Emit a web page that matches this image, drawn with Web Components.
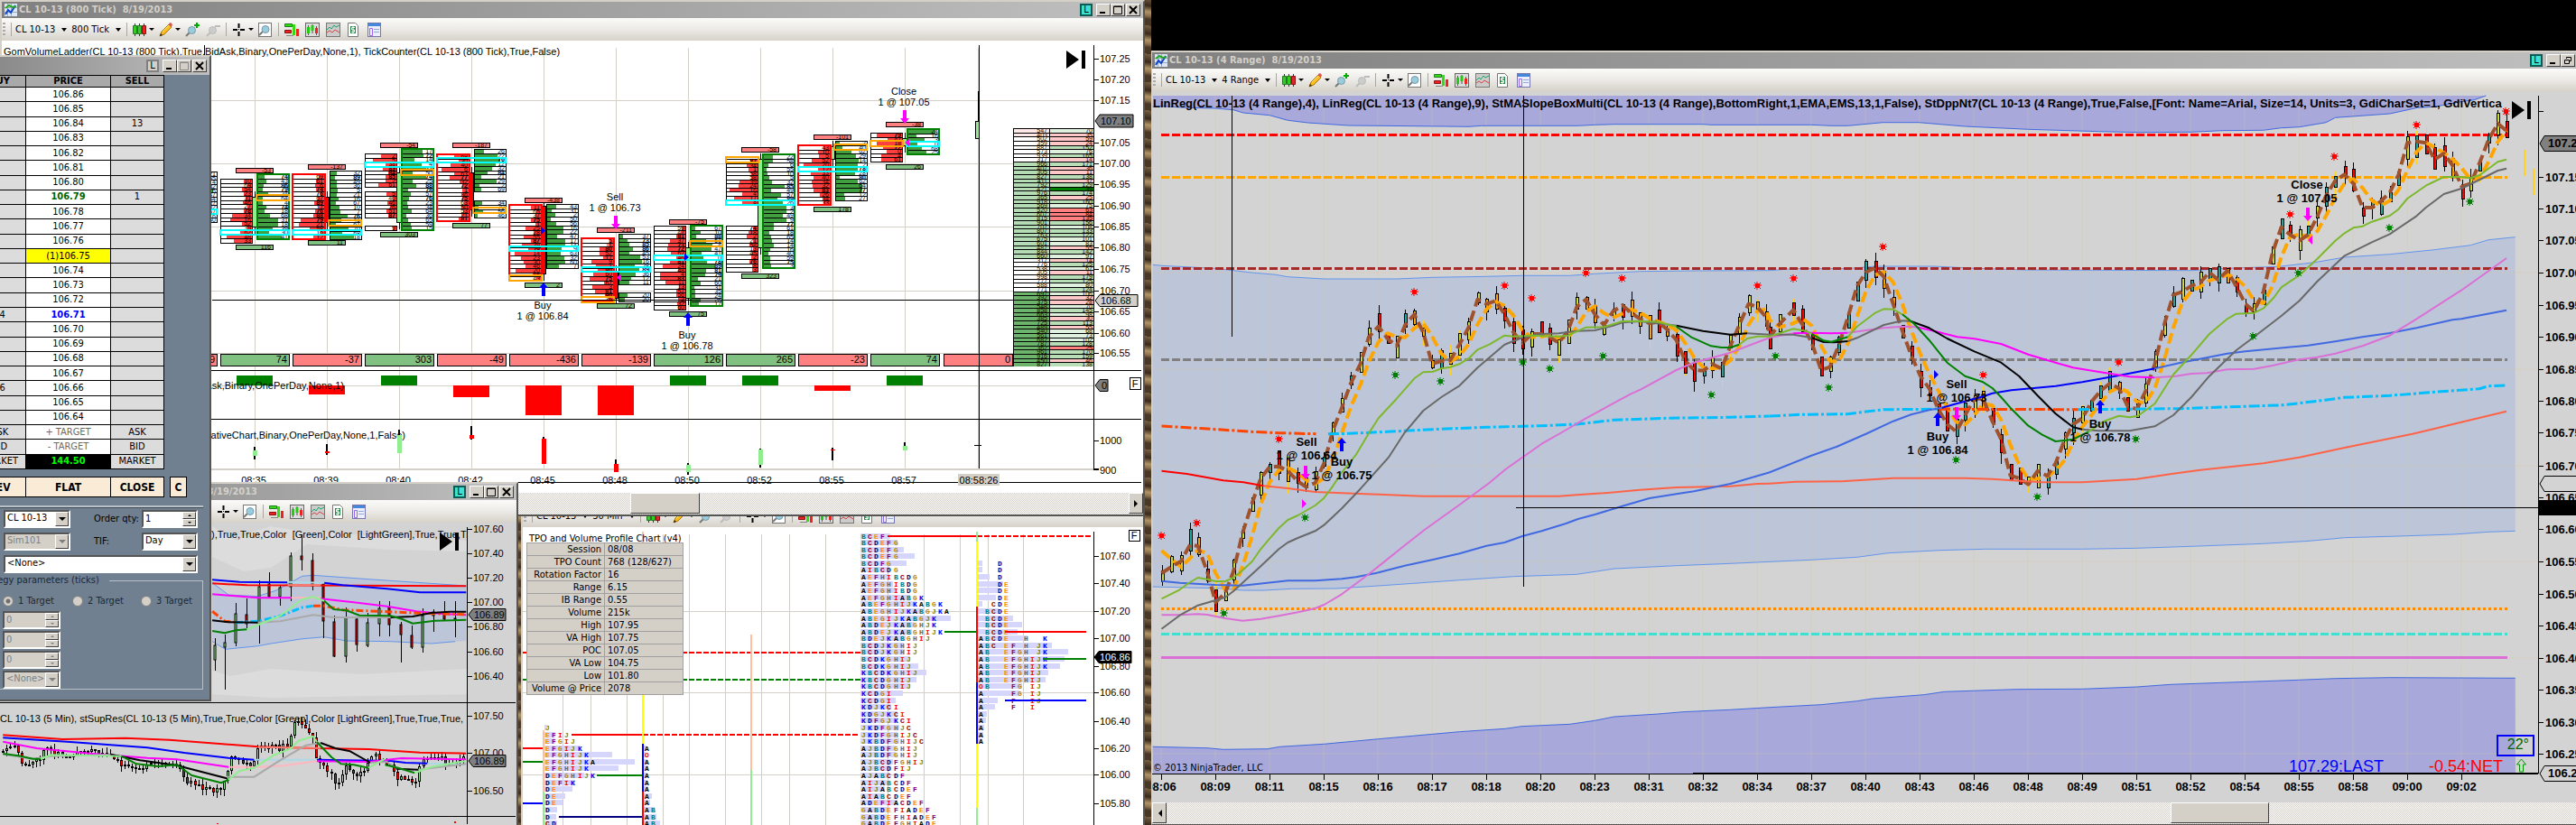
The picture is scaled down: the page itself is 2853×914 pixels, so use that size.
<!DOCTYPE html>
<html lang="en">
<head>
<meta charset="utf-8">
<title>CL 10-13 trading desktop</title>
<style>
html,body{margin:0;height:100%;overflow:hidden;background:#000}
body{font:11px/14px "DejaVu Sans Condensed","DejaVu Sans",sans-serif;color:#000}
</style>
</head>
<body>
<trading-desktop></trading-desktop>
<script>
/* ---------- drawing helpers ---------- */
const L=(x1,y1,x2,y2,c='#000',w=1,d='')=>`<line x1="${x1}" y1="${y1}" x2="${x2}" y2="${y2}" stroke="${c}" stroke-width="${w}"${d?` stroke-dasharray="${d}"`:''} shape-rendering="crispEdges"/>`;
const R=(x,y,w,h,f='none',s='',sw=1)=>`<rect x="${x}" y="${y}" width="${w}" height="${h}" fill="${f}"${s?` stroke="${s}" stroke-width="${sw}"`:''} shape-rendering="crispEdges"/>`;
const T=(x,y,t,o={})=>`<text x="${x}" y="${y}" font-size="${o.s||11}" text-anchor="${o.a||'start'}" fill="${o.f||'#000'}" font-weight="${o.w||400}"${o.ff?` font-family="${o.ff}"`:''}>${t}</text>`;
const UI="'DejaVu Sans Condensed','DejaVu Sans',sans-serif";
const pts=s=>s.trim().split(/\s+/).map(p=>p.split(',').map(Number));
/* a projection turns sample units into chart pixels */
const proj=(x0,sx,y0,sy)=>s=>pts(s).map(([x,y])=>[x0+x/sx,y0+y/sy]);
const path=p=>p.map(([x,y])=>x.toFixed(1)+','+y.toFixed(1)).join(' ');
const C=(p,c,w=1,d='')=>`<polyline points="${path(p)}" fill="none" stroke="${c}" stroke-width="${w}" stroke-linejoin="round"${d?` stroke-dasharray="${d}"`:''}/>`;
const G=(p,f)=>`<polygon points="${path(p)}" fill="${f}"/>`;
const arrow=(x,y,h,up,c)=>{const k=up?1:-1,t=up?y:y+h;return `<path fill="${c}" d="M${x} ${t}l5 ${6*k}h-3v${(h-6)*k}h-4v${-(h-6)*k}h-3z"/>`};
const tag=(x,y,w,h,t,f,c='#000',o={})=>`<path d="M${x} ${y}l5 ${-h/2}h${w-5}v${h}h${5-w}z" fill="${f}" stroke="#000"/>`+T(x+(o.dx||6),y+4,t,{f:c,...o});
const skip=(x,y)=>`<path d="M${x} ${y}v20l14 -10z"/>`+R(x+17,y,4,20,'#000');
const rng=seed=>()=>((seed=Math.imul(seed,1664525)+1013904223>>>0)/4294967296);

/* ---------- toolbar icons ---------- */
const ICON={
candles:'<path stroke="#333" d="M2.500 1v14M7.500 1v14M12.500 1v14"/><path fill="#3c2" stroke="#272" d="M.5 3.500h4v9h-4zM5.500 3.500h4v9h-4z"/><path fill="#e22" stroke="#811" d="M10.500 3.500h4v9h-4z"/>',
pencil:'<path fill="#fb2" stroke="#a70" d="M1 15l2-5 8-8 3 3-8 8z"/><path fill="#d55" d="M11 1l2-1 2 2-1 3-3-3z"/><path fill="#222" d="M1 15l1-3 2 2z"/><path stroke="#fe8" d="M4 10l7-7"/>',
zin:'<path stroke="#777" stroke-width="2" d="M1 15l4-4"/><circle cx="7.500" cy="8.500" r="4" fill="#9cd" stroke="#79a"/><path stroke="#0a0" stroke-width="2" d="M10 3h6M13 0v6"/>',
zout:'<path stroke="#bbb" stroke-width="2" d="M1 15l4-4"/><circle cx="7.500" cy="8.500" r="4" fill="#ccc" stroke="#bbb"/><path stroke="#bbb" stroke-width="2" d="M10 4h6"/>',
cross:'<path stroke="#000" stroke-width="2" d="M1 8h5M9 8h5M7.500 1v5M7.500 10v5"/><path fill="#000" d="M7 7h1v1h-1z"/>',
find:'<rect x=".5" y=".5" width="14" height="15" fill="#fff" stroke="#777"/><path stroke="#777" stroke-width="2" d="M1 14l4-4"/><circle cx="8" cy="7.500" r="4" fill="#9cd" stroke="#79a"/>',
trader:'<path fill="#3d1" stroke="#272" d="M.5 1.500h8v3h-8z"/><path fill="#e22" stroke="#811" d="M.5 8.500h7v3h-7z"/><path stroke="#888" d="M9 4.500h2M9 11.500h2M2 14.500h8"/><path fill="#3d1" d="M9 2h3v12h-3z"/><path fill="#e22" d="M13 7h3v8h-3z"/>',
panel:'<rect x=".5" y=".5" width="15" height="15" fill="#ddd" stroke="#666"/><path stroke="#555" d="M3.500 3v11M8 2v10M12.500 4v10"/><path fill="#2c1" d="M2 5h3v7H2zM6.500 3h3v6h-3z"/><path fill="#e22" d="M11 6h3v6h-3z"/>',
lines:'<rect x=".5" y=".5" width="15" height="15" fill="#ccc" stroke="#777"/><path fill="none" stroke="#1a6" d="M1 8l3-3 2 2 3-4 2 2 4-2"/><path fill="none" stroke="#d44" d="M1 11l3-2 3 2 3-3 5 3"/>',
money:'<path fill="#fff" stroke="#777" d="M1.500 .5h8l3 3v12h-11z"/><path fill="#284" d="M4 4h6v8H4z"/><path fill="none" stroke="#fff" d="M9 5.500H5.500V8h3v2.500H5M7 4v8"/>',
form:'<rect x=".5" y=".5" width="14" height="15" fill="#eef" stroke="#77a"/><path fill="#48d" d="M1 1h13v3H1z"/><path fill="none" stroke="#96e" d="M2.500 6.500h3v8h-3z"/><path stroke="#8ad" d="M7 7.500h6M7 10.500h6"/>'};
const icon=n=>`<svg width="16" height="16" viewBox="0 0 16 16" fill="none" aria-hidden="true">${ICON[n]}</svg>`;

/* ---------- window furniture ---------- */
const define=(name,html)=>customElements.define(name,class extends HTMLElement{
  connectedCallback(){ if(this.shadowRoot)return; this.attachShadow({mode:'open'}).innerHTML=typeof html==='function'?html(this):html; }
});

define('tool-bar',e=>`<style>
:host{display:flex;align-items:center;gap:7px;height:25px;padding-left:1px;background:linear-gradient(#fbfbfa,#eceae6 50%,#d6d2ca);overflow:hidden}
button{all:unset;display:flex;align-items:center;gap:6px;white-space:nowrap;font:inherit}
button.t{gap:7px;margin-left:-2px}
button i{border:solid transparent;border-width:3px 3px 0;border-top-color:#000;width:0}
button.t i{border-width:4px 3px 0;border-top-color:#000}
hr{width:1px;height:15px;margin:0 -1px;border:0;background:#aaa7a0;flex:none}
.g{width:3px;height:16px;background:repeating-linear-gradient(#aaa 0 2px,transparent 2px 4px);flex:none}
.d{width:22px;gap:3px}.d i{margin-left:-1px}
svg{flex:none}
</style><span class="g"></span><hr>
<button class="t">${e.getAttribute('instrument')}<i></i></button><button class="t">${e.getAttribute('period')}<i></i></button><hr>
<button class="d" aria-label="Chart style">${icon('candles')}<i></i></button><button class="d" aria-label="Draw">${icon('pencil')}<i></i></button>
<button aria-label="Zoom in">${icon('zin')}</button><button aria-label="Zoom out">${icon('zout')}</button><hr>
<button class="d" aria-label="Cross hair">${icon('cross')}<i></i></button><button aria-label="Data box">${icon('find')}</button><hr>
${['trader','panel','lines','money','form'].map(n=>`<button aria-label="${n}">${icon(n)}</button>`).join('')}`);

define('desk-window',e=>{
 const k=e.getAttribute('kind'), restore=k==='restore';
 return `<style>
:host{display:flex;flex-direction:column;box-sizing:border-box;position:absolute;border:2px solid;border-color:#d4d0c8 #555 #555 #d4d0c8;background:#d4d0c8}
header{display:flex;align-items:center;height:18px;padding:0 3px;background:linear-gradient(90deg,#808080,#c0c0c0);color:#d4d0c8;font-weight:700;white-space:pre}
h1{font:inherit;margin:0 auto 0 2px}
:host([kind=tail]) h1{margin-left:98px;width:170px;text-align:right}
:host([kind=tool]) header{height:20px;background:linear-gradient(90deg,#8a8a8a,#c0c0c0)}
button{all:unset;box-sizing:border-box;width:16px;height:14px;border:1px solid;border-color:#fff #404040 #404040 #fff;background:#d4d0c8;display:grid;place-items:center}
.l{width:14px;height:14px;margin-right:4px;border:2px solid #0a5c55;background:#40e0d0;color:#000;font-weight:400;line-height:10px}
:host([kind=tool]) .l{border-color:#808080;background:#d4d0c8}
.x{margin-left:1px}
</style><header>${k==='tool'?'':`<svg width="14" height="14" viewBox="0 0 14 14" fill="none"><rect width="14" height="14" fill="#dde6f5"/><path stroke="#9ab" d="M3.500 0v14M7.500 0v14M0 4.500h14M0 9.500h14"/><path stroke="#14c" stroke-width="2" d="M1 12l3-5 3 3 5-8"/><path stroke="#2a2" stroke-width="2" d="M1 5l4-3 4 2 4-1"/></svg>`}<h1>${e.getAttribute('heading')||''}</h1>
<button class="l">L</button><button aria-label="Minimize"><svg width="10" height="10"><path d="M1 7h6v2H1z"/></svg></button><button aria-label="Maximize"><svg width="10" height="10" fill="none" stroke="${k==='tool'?'#888':'#000'}">${restore?'<path d="M3.500 3V1.500h5v4H7M1.500 4.500h5v4h-5z"/>':'<path d="M.5 1h9v8.500h-9zM0 1.500h10"/>'}</svg></button><button class="x" aria-label="Close"><svg width="10" height="10" stroke="#000" stroke-width="2"><path d="M1 1l8 8M9 1l-8 8"/></svg></button></header><slot></slot>`});

define('scroll-track',e=>`<style>
:host{display:flex;height:24px;background:repeating-conic-gradient(#d4d0c8 0 25%,#fff 0 50%) 0 0/2px 2px}
b{box-sizing:border-box;height:23px;width:16px;background:#d4d0c8;border:1px solid;border-color:#fff #404040 #404040 #fff;display:grid;place-items:center}
.t{flex:${e.getAttribute('size')} 0 0}.p{flex:${e.getAttribute('before')} 0 0}.n{flex:${e.getAttribute('after')} 0 0}
</style><b><svg width="5" height="8"><path d="M5 0v8L1 4z"/></svg></b><span class="p"></span><b class="t"></b><span class="n"></span><b><svg width="5" height="8"><path d="M0 0v8l4-4z"/></svg></b>`);

/* ---------- charts ---------- */
class Chart extends HTMLElement{
 connectedCallback(){ if(this.shadowRoot)return;
  this.attachShadow({mode:'open'}).innerHTML=`<style>:host{display:block;position:relative}.plot{display:block;width:100%;height:auto;font-family:"Liberation Sans",Arial,sans-serif;background:${this.bg}}text{white-space:pre}::slotted(*){position:absolute}</style><svg class="plot" viewBox="${this.box}">${this.draw()}</svg><slot></slot>`;}
}

/* volume ladder chart, 800 tick */
customElements.define('ladder-chart',class extends Chart{
 bg='#fff'; box='2 45 1264 501';
 rand=rng(7);
 cells(x0,x1,ya,yb,left,hot){ let s=R(x0,ya,x1-x0,yb-ya,'#fff');const n=Math.round((yb-ya)/4.67);
  for(let i=0;i<n;i++){const y=Math.round(ya+i*(yb-ya)/n),v=Math.floor(this.rand()*90),near=hot?Math.abs(y-hot)<26:0;
   const w=Math.round(4+this.rand()*8+(near?this.rand()*20:0)),h=4;
   s+=R(left?x1-w:x0,y,w,h+1,left?'#ff4040':'#40a040')+T(x1-1,y+5,v,{s:7,a:'end',w:v>70?700:400})+L(x0,y,x1,y);}
  return s+R(x0,ya,x1-x0,yb-ya,'none','#000');}
 cluster(c,o){ let s='';
  if(o.k){const[a,b,col]=o.k;s+=L(c,a-6,c,b+8);}
  (o.l||[]).forEach(r=>s+=this.cells(c-38,c-3,r[0],r[1],1,o.cy));
  (o.r||[]).forEach(r=>s+=this.cells(c+3,c+38,r[0],r[1],0,o.cy));
  if(o.k){const[a,b,col]=o.k;s+=R(c-3,a,5,b-a,col,'#000');}
  if(o.f==='l'){const a=o.l[0][0],b=o.l[o.l.length-1][1];s+=R(c-38,a,36,b-a,'none','#f00',2);}
  if(o.f==='r'){const a=o.r[0][0],b=o.r[o.r.length-1][1];s+=R(c+3,a,35,b-a,'none','#008000',2);}
  if(o.o)s+=R(o.o[0]?c+2:c-38,o.o[1]-3,36,6,'none','#ffa500',2);
  if(o.cy)s+=R(o.cr?c+2:c-38,o.cy-2,o.cr?36:76,5,'none','#0ff',2);
  if(o.t)s+=R(c-21,o.t[0],41,5,'#ff8080','#000')+T(c+18,o.t[0]+5,o.t[1],{s:7,a:'end'});
  if(o.b)s+=R(c-21,o.b[0],41,5,'#80c080','#000')+T(c+18,o.b[0]+5,o.b[1],{s:7,a:'end'});
  return s;}
 draw(){ let s='';const cols=[282,362,442,522,602,682,762,842,922,1002,1083],g='#d4d0c8';
  [202,...cols].forEach(x=>s+=L(x,53,x,520,g));
  [111,181,251,322,391,427].forEach(y=>s+=L(0,y,1211,y,g)); s+=L(0,520,1211,520,g,2);
  s+=T(4,61,'GomVolumeLadder(CL 10-13 (800 Tick),True,BidAsk,Binary,OnePerDay,None,1), TickCounter(CL 10-13 (800 Tick),True,False)')+L(226,50,226,62);
  const lg='#90ee90',rd='#f00';
  s+=this.cluster(202,{r:[[190,246]],cy:234});
  s+=this.cluster(282,{t:[186,'-53'],b:[271,'116'],l:[[198,269]],r:[[193,265]],f:'r',o:[1,219],cy:257,k:[218,251,lg]});
  s+=this.cluster(362,{t:[182,'-137'],b:[266,'11'],l:[[193,265]],r:[[189,265]],f:'l',o:[1,247],cy:257,k:[218,246,rd]});
  s+=this.cluster(442,{t:[158,'-54'],b:[257,'303'],l:[[170,207],[212,241],[250,255]],r:[[165,255]],f:'r',o:[1,191],cy:182,k:[191,246,lg]});
  s+=this.cluster(522,{t:[158,'-187'],b:[247,'77'],l:[[171,245]],r:[[165,212],[222,241]],f:'l',o:[1,233],cy:177,k:[191,232,rd]});
  s+=this.cluster(602,{t:[219,'-438'],b:[313,'2'],l:[[227,311]],r:[[226,297]],f:'l',o:[0,308],cy:275,k:[228,303,rd]});
  s+=this.cluster(682,{t:[252,'-211'],b:[336,'72'],l:[[264,334]],r:[[259,315],[324,334]],f:'l',o:[0,332],cy:298,k:[300,330,rd]});
  s+=this.cluster(762,{t:[243,'-75'],b:[345,'75'],l:[[250,343]],r:[[250,339]],f:'r',o:[1,270],cy:285,k:[274,330,lg]});
  s+=this.cluster(842,{t:[163,'-58'],b:[303,'323'],l:[[176,226],[250,301]],r:[[171,297]],f:'r',o:[0,177],cy:224,k:[176,274,lg]});
  s+=this.cluster(922,{t:[149,'-101'],b:[229,'178'],l:[[161,227]],r:[[156,222]],f:'l',o:[1,163],cy:187,k:[162,176,lg]});
  s+=this.cluster(1002,{t:[135,'-38'],b:[182,'26'],l:[[147,179]],r:[[143,171]],f:'r',o:[0,159],cy:159,cr:1,k:[153,161,lg]});
  s+=L(1083,101,1083,134)+R(1080,134,4,19,lg,'#000');
  /* session profile */
  for(let i=0;i<57;i++){const y=Math.round(142+i*264/57),u=this.rand();
   const a=y<179?(y<150?'#ffe8e8':'#fff'):y<282?'#b4dcb4':y<320?'#fff':'#6cb46c';
   let b=u<.3?'#ffc8c8':u<.6?'#dff0df':'#b8deb8'; if(y>227&&y<240)b='#ff8080'; if(y>203&&y<208)b='#008000'; if(y>378&&y<384)b='#ff8080';
   s+=R(1122,y,40,5,a)+R(1162,y,49,5,b)+T(1160,y+5,300+Math.floor(u*700),{s:7,a:'end'})+T(1210,y+5,10+Math.floor(u*170),{s:7,a:'end'})+L(1122,y,1211,y);}
  s+=L(1122,142,1122,406)+L(1162,142,1162,406);
  /* trades */
  const tr=(x,y,a,b)=>T(x,y,a,{a:'middle'})+T(x,y+12,b,{a:'middle'});
  s+=tr(601,342,'Buy','1 @ 106.84')+tr(681,222,'Sell','1 @ 106.73')+tr(761,375,'Buy','1 @ 106.78')+tr(1001,105,'Close','1 @ 107.05');
  s+=arrow(602,313,15,1,'#00f')+arrow(762,346,15,1,'#00f')+arrow(682,239,15,0,'#f0f')+arrow(1002,122,15,0,'#f0f');
  s+='<path fill="#00f" d="M599 251v9l5-4.500zM758 281v8l5-4z"/><path fill="#f0f" d="M688 303v9l-5-4.500zM1007 154v8l-5-4z"/>';
  /* delta strip */
  const d=[['-9',0],['74',1],['-37',0],['303',1],['-49',0],['-436',0],['-139',0],['126',1],['265',1],['-23',0],['74',1],['0',0]];
  d.forEach(([v,p],i)=>{const x=i?cols[i-1]:202;s+=R(x-38,392,76,13,p?'#80c080':'#ff8080','#000')+T(x+36,402,v,{a:'end'});});
  s+=L(0,410,1264,410)+L(0,464,1264,464);
  [[282,11],[362,-10],[442,11],[522,-13],[602,-33],[682,-33],[762,11],[842,11],[922,-6],[1002,11]].forEach(([x,h])=>s+=R(x-20,h>0?427-h:427,40,Math.abs(h),h>0?'#008000':'#f00'));
  s+=T(381,431,'GomDelta(CL 10-13,BidAsk,Binary,OnePerDay,None,1)',{a:'end'})+T(449,486,'GomCD(CL,CumulativeChart,Binary,OnePerDay,None,1,False)',{a:'end'});
  [[282,495,509,499,505,1],[362,492,504,500,502,0],[442,476,482,482,502,1],[522,472,487,482,486,0],[602,484,490,486,514,0],[682,509,516,514,523,0],[762,513,526,515,523,1],[842,497,518,498,515,1],[922,496,510,498,499,0],[1002,490,496,494,499,1]].forEach(([x,a,b,c,e,u])=>s+=R(x-1,a,2,b-a,'#000')+R(x-2,c,5,e-c,u?lg:rd));
  s+=L(1079,493,1087,493);
  ['08:35','08:39','08:40','08:42','08:45','08:48','08:50','08:52','08:55','08:57'].forEach((t,i)=>s+=T(cols[i]-1,536,t,{a:'middle'}));
  s+=L(235,534,1264,534)+R(1061,525,46,13,'#d4d0c8')+T(1084,536,'08:58:26',{a:'middle'});
  /* axis */
  s+=L(1211,50,1211,520);
  [['107.25',65],['107.20',88],['107.15',111],['107.05',158],['107.00',181],['106.95',204],['106.90',228],['106.85',251],['106.80',274],['106.75',298],['106.70',322],['106.65',345],['106.60',369],['106.55',391],['1000',488]].forEach(([t,y])=>s+=L(1211,y,1217,y)+T(1218,y+4,t));
  s+=L(1211,520,1217,520,'#000',2)+T(1218,525,'900')+L(235,332,1211,332)+L(1084,50,1084,519);
  s+=tag(1213,134,42,14,'107.10','#808080')+tag(1213,333,47,13,'106.68','#d4d0c8')+tag(1213,427,14,13,'0','#808080','#000',{dx:7});
  s+=R(1251,418,12,13,'#fff','#000')+T(1257,429,'F',{a:'middle'});
  return s+skip(1181,56);}
});

/* five minute chart with two panels */
customElements.define('minute-chart',class extends Chart{
 bg='#d3d3d3'; box='0 580 572 338';
 draw(){const p=proj(0,2.45,600,3);let s='';
  s+=G([[235,584],[262,600],[280,590],[300,584],[335,590],[517,600],[517,612],[430,610],[340,604],[300,630],[270,634],[235,618]],'#dcdcdc')+G([[235,744],[255,750],[300,742],[330,744],[400,748],[517,742],[517,770],[300,774],[235,770]],'#dcdcdc');
  s+=G(p('576,140 620,180 700,190 750,165 820,118 850,115 1000,128 1265,150 1265,333 1170,342 1060,335 940,333 880,320 735,342 700,350 612,361 576,335'),'#bdc6d8');
  s+=C(p('576,140 620,180 700,185 750,165 820,118 850,115 1000,128 1265,150'),'#6495ed')+C(p('576,335 612,361 700,350 735,342 820,326 880,320 940,333 1060,335 1170,342 1235,335'),'#6495ed');
  [[582,325,348,395,432,1],[611,312,340,353,494,1],[640,208,243,340,350,1],[670,193,246,275,290,0],[702,133,153,272,342,1],[731,106,145,185,190,0],[760,148,155,185,215,1],[790,40,52,152,200,1],[819,-20,50,62,98,0],[848,43,65,150,165,0],[878,140,145,268,325,0],[907,248,270,383,386,0],[939,223,255,385,404,1],[968,255,260,346,368,0],[998,240,272,347,354,1],[1028,202,226,277,317,1],[1057,202,222,280,317,0],[1087,270,280,313,404,0],[1116,283,315,354,360,0],[1146,225,248,353,373,1],[1175,228,238,250,302,1],[1206,202,240,260,267,0],[1235,202,258,262,322,1]].forEach(([x,a,b,c,d,u])=>{const X=Math.round(x/2.45),Y=v=>Math.round(600+v/3);s+=L(X,Y(a),X,Y(d))+`<rect x="${X-1}" y="${Y(b)}" width="2" height="${Math.max(1,Y(c)-Y(b))}" fill="${u?'#90ee90':'#f00'}" stroke="#000"/>`;});
  const c=(a,col,w=2,d='')=>s+=C(p(a),col,w,d);
  c('576,142 670,148 1265,151','#f00');c('780,148 870,148','#fa8072');c('576,130 650,137 780,139','#00f');c('780,137 880,140','#add8e6');c('880,140 930,148 1050,160 1140,172 1265,172','#00f');
  c('576,178 700,190 790,190','#f0f');c('790,190 870,190','#ffb6c1');c('870,193 960,205 1050,218 1130,235 1200,243 1265,247','#f0f');
  c('576,235 610,268 640,271','#ff4500',3,'8 3 2 3');c('640,272 700,268 760,250 820,222 850,217','#00bfff',3,'8 3 2 3');c('850,217 880,217 930,230 1050,236 1140,241 1265,245','#ff4500',3,'8 3 2 3');
  c('576,265 620,271 700,272','#000');c('700,272 760,268 850,247 905,255 1060,255','#a9a9a9');c('1060,255 1120,252 1170,240 1220,236 1265,236','#000');
  c('576,300 610,307 640,298 670,295','#008000');c('670,295 740,260 760,250 820,195 850,187 880,200','#90ee90');c('880,200 905,228 940,232 975,248 1060,250 1090,260 1120,275 1180,266 1265,263','#008000');
  s+=L(0,779,571,779)+L(0,905,571,905);
  /* lower panel candles follow a sampled price path */
  const q=pts('8,705 40,685 60,745 100,735 125,695 170,715 250,700 300,715 350,760 400,750 430,740 480,745 505,800 550,825 595,830 612,800 625,725 680,745 705,680 760,690 785,670 800,590 820,620 850,650 860,735 885,760 915,810 940,750 975,785 1010,710 1050,740 1080,790 1130,795 1145,730 1180,720 1230,740 1260,720');
  const r=rng(11);let j=0,prev=700;
  for(let x=8;x<1260;x+=10){while(q[j+1][0]<x)j++;const t=(x-q[j][0])/(q[j+1][0]-q[j][0]);const v=q[j][1]+t*(q[j+1][1]-q[j][1])+(r()-.5)*20;
   const X=Math.round(x/2.45),a=Math.round(600+Math.min(v,prev)/3),b=Math.round(600+Math.max(v,prev)/3);
   s+=L(X,a-Math.round(r()*6),X,b+Math.round(r()*7))+R(X-1,a,3,Math.max(2,b-a),'#000')+R(X,a+1,1,Math.max(0,b-a-2),v<prev?'#90ee90':'#f00');prev=v;}
  c('8,646 170,660 340,656 460,662 700,685 860,690 1000,693 1140,704 1265,707','#f00');c('700,686 870,689','#fa8072');
  c('8,655 200,670 400,688 500,705 620,722 690,728','#00f');c('690,728 860,728','#add8e6');c('860,728 1060,732 1100,738 1160,740','#00f');c('1160,740 1265,745','#add8e6');
  c('8,668 100,690 250,708 400,722 480,727 620,752','#f0f');c('620,752 700,752 770,748 860,733','#ffb6c1');c('860,733 1000,735 1090,723 1265,727','#f0f');
  c('8,710 90,725 140,716 300,712','#a9a9a9');c('300,710 380,730 480,747 615,790','#000');c('615,785 690,785 760,730 830,680 870,672','#a9a9a9');c('870,672 910,690 950,700 1005,738','#000');c('1005,738 1050,735 1080,760','#a9a9a9');c('1075,758 1135,761','#000');c('1135,761 1265,742','#a9a9a9');
  c('8,708 50,715 90,725 110,725','#008000');c('110,725 140,712 330,716','#90ee90');c('330,716 370,742 430,750 480,745 520,780 600,805 620,795','#008000');c('620,795 650,765 690,755 740,715 790,690 810,665 850,650 860,670','#90ee90');c('860,670 900,720 925,742 960,745 1000,755','#008000');c('1000,755 1045,725','#90ee90');c('1045,745 1080,755 1125,772','#008000');c('1125,772 1170,752 1265,732','#90ee90');
  s+=`<svg x="0" y="580" width="517" height="338" viewBox="0 580 517 338">`+T(234,597,'),True,True,Color  [Green],Color  [LightGreen],True,True,True')+T(0,801,'CL 10-13 (5 Min), stSupRes(CL 10-13 (5 Min),True,True,Color [Green],Color [LightGreen],True,True,True,')+'</svg>';
  s+=L(517,585,517,914)+skip(487,591)+L(240,913,242,913,'#f00')+L(503,912,505,912,'#f00',2);
  [['107.60',587],['107.40',614],['107.20',641],['107.00',668],['106.80',695],['106.60',723],['106.40',750],['107.50',794],['107.00',835],['106.50',877]].forEach(([t,y])=>s+=L(517,y,523,y)+T(524,y+4,t));
  return s+tag(519,682,41,13,'106.89','#808080')+tag(519,844,41,13,'106.89','#808080');}
});

/* market profile chart */
customElements.define('tpo-chart',class extends Chart{
 bg='#fff'; box='579 584 687 338';
 draw(){let s='';const X=v=>Math.round(560+v/2.178),Y=v=>Math.round(580+v/3);
  const tint={A:'#000',B:'#008080',C:'#900000',D:'#000080',E:'#ff8c00',F:'#800080',G:'#b8860b',H:'#696969',I:'#f00',J:'#808000',K:'#00f',O:'#f00'};
  [137,204,291,378,443,530,617,683,770,922,1009,1096,1162,1249].forEach(x=>s+=L(X(x),592,X(x),922,'#d0cec8'));
  [290,562,835].forEach(y=>s+=L(576,Y(y),1211,Y(y),'#d4d0c8'));
  const col=(x,row,list,ends)=>list.forEach((w,i)=>{const y=Y(40.5+(row+i)*22.76);
   if(ends[i])s+=R(x-1,y-3,X(ends[i])-x+1,6,'#d6d6fc');
   let t='';[...w].forEach((ch,k)=>{if(ch!==' ')t+=`<tspan x="${x+Math.round(k*7.1)}" fill="${tint[ch]}">${ch}</tspan>`});
   if(t)s+=`<text y="${y+3}" font-family="'Liberation Mono',monospace" font-weight="700" font-size="8">${t}</text>`;});
  col(954,0,'BCEF,BCDEFG,BCDEFG,BCDEFG,BCDFG,AIBCDG,AEFHIBCDG,AEFGHIBDG,AEFGHIBDG,AEFGHIABGK,ABEFGHIJKABGK,ABEGHIJKABGJKA,ABEGIJKABGJK,ABDEJKABGHJK,ABDEJKABGHIJK,BDEJKABGHIJ,BCDJKGHIJ,BCDJKGHIJ,BCDKGHIJ,BCDKGHIJ,KBCDKGHIJ,KBCDGHIJ,KBCDGHIJ,KCDGI,KCDGI,KDJKCI,KDGJKCI,KDFGJKCI,JKDFGHJC,JKDFGHIJC,JKBDFGHIJC,AJBDFGHIJ,AJBDFGHIJ,AJBCDFGHIJ,AJBCDFIJ,AJABCDF,AIJABCDF,AIJABCDEF,AIABCDEF,ADEFIACDEF,GABDEFIADEF,GABDEFHIADEF,GABDEFGHIADE'.split(','),[928,945,960,987,967,925,925,935,940,975,990,1010,1074,985,980,965,960,962,975,995,1015,991,975,958,940,930,945,945,950,945,950,940,940,935,930,925,920,915,915,945,925,920,920]);
  col(1084,4,['   D','   D','   D','   DE','   DE','   DE','  CDE',' BCDE',' BCDE',' BCDE',' BCDE','ABCDE  H  K','ABC EF H JK','AB  EFGH JK','AB  EFGHIJK','AB  EFGHIJK','AB  EFGHIJ','AB  EFGHIJ','OB   FG IJ','A    FG IJ','A    F  IJ','A    F  I','A','A','A','A','A'],[1150,1150,1168,1200,1190,1183,1150,1190,1223,1246,1235,1258,1318,1357,1348,1338,1310,1302,1246,1240,1187,1180,1160,1158,1155,1152,1150]);
  col(604,28,['J','EFIJ','EFGIJ','EFGIJK','EFGHIJK','EFGHIJKA','EFGHIJK','DEFGHIJK','DEFIK','DE','DE','DE','D','D','CD'],[100,120,120,180,257,311,272,190,168,162,144,137,125,121,125]);
  col(714,31,['A','O','A','A','A','A','A','A','A','AB','AB','AB'],[340,338,342,345,342,342,345,352,348,360,364,372]);
  const h=(a,b,y,c,d)=>s+=L(X(a),Y(y),X(b),Y(y),c,2,d),v=(x,a,b,c)=>s+=L(X(x),Y(a),X(x),Y(b),c,2);
  h(922,1137,41,'#f00');h(1137,1413,41,'#f00','6 2');h(1058,1137,360,'#008000');h(1204,1400,360,'#f00');h(1296,1400,450,'#008000');h(1204,1400,588,'#00f');
  h(42,857,429,'#f00','6 2');h(42,857,519,'#008000','6 2');h(160,332,702,'#f00');h(332,852,702,'#f00','6 2');h(42,90,747,'#f00');h(42,90,792,'#008000');h(42,90,930,'#00f');h(220,330,836,'#008000');h(128,330,976,'#000080');
  v(1137,27,60,'#90ee90');v(1137,60,275,'#ff0');v(1137,275,528,'#f00');v(1137,528,732,'#00f');v(1137,732,946,'#ff0');v(1137,946,1010,'#90ee90');
  v(331,27,64,'#ffc0a0');v(331,560,732,'#ff0');v(331,732,890,'#00f');v(331,890,1010,'#f00');v(592,369,820,'#ffc0a0');v(592,820,1010,'#90ee90');v(91,688,890,'#ffc0a0');v(91,890,1010,'#90ee90');
  s+=T(586,600,'TPO and Volume Profile Chart (v4)',{ff:UI})+L(1211,589,1211,922);
  [['107.60',616],['107.40',646],['107.20',677],['107.00',707],['106.80',738],['106.60',767],['106.40',799],['106.20',829],['106.00',858],['105.80',890]].forEach(([t,y])=>s+=L(1211,y,1217,y)+T(1218,y+4,t));
  return s+tag(1212,728,41,13,'106.86','#000','#fff')+R(1250,587,12,12,'#fff','#000')+T(1256,597,'F',{a:'middle'});}
});

/* four range chart */
customElements.define('range-chart',class extends Chart{
 bg='#d3d3d3'; box='1276 101 1596 788';
 draw(){const a=proj(1270,2.24,40,3),b=proj(1960,1.756,40,3);let s='';
  const top=[...a('15,235 37,233 100,238 170,240 215,245 240,255 305,263 350,280 400,288 500,297 740,300 800,301 830,298 1070,298 1112,295 1160,293 1380,293 1400,295'),...b('0,295 80,295 120,298 152,298 220,287 290,287 380,300 503,310 640,317 720,320 820,319 880,314 960,313 995,305 1030,302 1082,287 1100,271 1206,258 1260,238 1293,235 1345,218 1370,212 1393,198')];
  const up=[...a('15,760 37,763 170,772 260,786 320,793 350,800 440,807 620,807 710,802 843,799 930,796 1050,796 1112,790 1224,782 1360,780'),...b('0,779 46,773 150,773 205,765 320,765 400,772 500,777 820,779 890,772 990,766 1060,752 1118,735 1206,725 1293,710 1363,695 1398,677 1450,668')];
  const lo=[...a('15,1830 100,1833 180,1835 238,1842 290,1842 360,1837 470,1836 551,1829 640,1821 776,1808 910,1796 1067,1789 1112,1780 1160,1770 1314,1760 1448,1753'),...b('0,1747 80,1741 170,1732 230,1718 330,1709 420,1705 608,1705 714,1702 820,1696 960,1687 1050,1678 1118,1667 1206,1663 1330,1656 1398,1648 1450,1645')];
  const bot=[...a('15,2362 150,2366 190,2371 300,2369 330,2362 440,2353 575,2336 710,2320 776,2312 890,2302 930,2294 1050,2287 1112,2275 1160,2262 1269,2253 1330,2246 1448,2239'),...b('0,2231 100,2222 170,2210 200,2202 300,2189 340,2179 480,2171 608,2170 714,2163 780,2155 1030,2140 1100,2135 1206,2132 1450,2134')];
  s+=G([[1277,106],...top],'#a9a8da')+G([...up,...[...lo].reverse()],'#bdc6d8')+G([...bot,[2786,857],[1277,857]],'#a9a8da');
  const times='08:06 08:09 08:11 08:15 08:16 08:17 08:18 08:20 08:23 08:31 08:32 08:34 08:37 08:40 08:43 08:46 08:48 08:49 08:51 08:52 08:54 08:55 08:58 09:00 09:02'.split(' ');
  times.forEach((t,i)=>s+=`<line x1="${1286+i*60}" x2="${1286+i*60}" y1="107" y2="857" stroke="#d4c8a0" stroke-opacity=".35"/>`);
  [302,409,516,622,729,835].forEach(y=>s+=`<line x1="1277" x2="2811" y1="${y}" y2="${y}" stroke="#d4c8a0" stroke-opacity=".35"/>`);
  s+=C(top,'#4169e1')+C(up,'#6495ed')+C(lo,'#6495ed')+C(bot,'#4169e1');
  [[149,'#f00',3,'9 3'],[196,'#ffa500',3,'9 3'],[297,'#a52a2a',3,'9 3'],[398,'#808080',3,'9 3'],[674,'#ff8c00',3,'3 3'],[702,'#40e0d0',3,'9 3'],[728,'#da70d6',3,'']].forEach(([y,c,w,d])=>s+=L(1286,y,2777,y,c,w,d));
  const fast=[...a('37,1785 60,1765 85,1745 108,1690 127,1695 150,1780 171,1882 195,1850 215,1780 238,1650 262,1550 283,1470 305,1432 328,1430 350,1445 375,1480 395,1498 418,1485 440,1420 462,1310 484,1235 506,1155 530,1090 551,1000 575,965 597,1005 620,1030 641,960 664,925 686,985 708,1090 731,1080 753,1078 776,1025 798,970 821,875 843,890 866,880 888,925 910,985 932,1020 955,990 978,990 1000,1000 1022,1020 1045,980 1067,900 1090,875 1112,925 1134,960 1157,915 1180,895 1202,920 1224,940 1247,955 1269,950 1291,975 1314,1010 1336,1080 1358,1110 1381,1112 1403,1090 1426,1105 1448,1030 1470,960 1493,890 1515,900 1537,935'),...b('0,1000 20,955 46,910 64,960 82,1020 100,1110 117,1100 134,1030 152,935 170,830 187,785 205,770 222,800 240,890 258,980 275,1060 293,1130 310,1170 328,1240 345,1290 363,1315 380,1260 398,1205 415,1205 433,1280 450,1340 468,1460 486,1470 503,1490 521,1445 540,1462 556,1420 574,1340 590,1290 608,1270 626,1215 643,1180 661,1155 679,1170 696,1230 714,1240 731,1180 749,1090 767,960 785,860 802,850 820,830 837,820 855,785 872,810 890,780 907,830 925,890 942,915 960,850 978,720 995,635 1012,660 1030,680 1047,660 1065,600 1082,530 1100,480 1118,460 1135,490 1153,570 1171,570 1188,550 1206,520 1223,460 1240,355 1258,350 1276,355 1293,410 1311,390 1328,430 1346,500 1363,490 1381,420 1398,345 1416,290 1433,315')];
  const r=rng(5);
  fast.forEach(([x,y],i)=>{const n=fast[Math.min(i+1,fast.length-1)][1],o=fast[Math.max(i-1,0)][1],upb=n<=o,X=Math.round(x),h=8+Math.round(r()*18),t=Math.round(y-h/2+(r()-.5)*12),c=upb?(r()<.5?'#cddc32':'#20a89c'):(r()<.75?'#f00':'#ffa500'),w=r()<.3?'#ffd21e':'#000';
   s+=L(X,t-Math.round(r()*9),X,t+h+Math.round(r()*14),w)+R(X-1,t,3,h,c,'#000');});
  const at=i=>fast[Math.max(i,0)][1];
  const slow=fast.map(([x],i)=>[x,at(i)*.3+at(i-1)*.4+at(i-2)*.3]);
  slow[0][1]-=25;slow[1][1]-=14;
  s+=C(slow,'#ffa500',4,'12 5')+C(fast,'#a0522d',4,'12 5');
  const A=(t,c,w=2,d='')=>s+=C(a(t),c,w,d),B=(t,c,w=2,d='')=>s+=C(b(t),c,w,d);
  A('37,1296 150,1305 260,1315 330,1319 420,1322','#ff4500',3,'12 3 3 3');A('450,1322 500,1321 597,1315 710,1307 843,1300 978,1295 1067,1290 1160,1276 1291,1270 1448,1267 1545,1263','#00bfff',3,'12 3 3 3');
  B('0,1263 60,1258 150,1256 222,1241 330,1240','#00bfff',3,'12 3 3 3');B('330,1240 600,1241','#ff4500',3,'12 3 3 3');B('600,1241 800,1238 1000,1226 1080,1210 1118,1201 1206,1195 1276,1185 1380,1172 1398,1163 1433,1161','#00bfff',3,'12 3 3 3');
  A('37,1445 100,1455 190,1477 240,1483 290,1495','#f00');A('290,1495 350,1503 418,1515 484,1519 575,1523 686,1529 1022,1529 1067,1525 1134,1519 1224,1508 1314,1500 1448,1496 1515,1488 1546,1487','#ff6347');B('0,1487 50,1481 140,1480 240,1469 380,1469 433,1472 486,1478 530,1483 608,1483 714,1472 785,1454 837,1442 960,1420 1030,1400 1118,1368 1250,1322 1276,1312 1345,1283 1433,1247','#ff6347');
  A('37,1811 82,1817 171,1824 238,1826 350,1810 418,1810 484,1804 520,1798 575,1783 640,1760 710,1740 776,1720 843,1694 888,1683 932,1662 980,1645 1040,1620 1070,1605 1112,1590 1180,1562 1247,1536 1314,1522 1358,1513 1448,1488 1515,1462 1546,1450','#4169e1');B('0,1450 80,1395 130,1365 190,1320 240,1280 275,1258 310,1243 335,1235','#4169e1');B('335,1235 363,1222 415,1198 433,1187 470,1177 556,1163 608,1150 679,1128 749,1105','#00f');B('749,1105 800,1085 890,1055 925,1048 1047,1028 1100,1015 1153,1000 1206,987 1258,970 1328,943 1345,940 1433,911','#4169e1');
  A('37,1924 82,1924 127,1921 150,1923 195,1935 238,1943 283,1937 328,1927 375,1915 418,1902 440,1890 484,1855 551,1788 640,1693 690,1640 776,1558 850,1485 890,1440 980,1355 1030,1317 1090,1270 1200,1190 1225,1175 1314,1110 1358,1085 1448,1052 1515,1018 1546,1002','#da70d6');B('0,1002 46,988','#da70d6');B('46,988 80,986 120,988 152,986','#f0f');B('152,986 222,970 258,965 285,967','#da70d6');B('285,967 320,980 365,1000 398,1006 450,1023 503,1058 556,1085 590,1102 643,1117 700,1132 749,1135','#f0f');B('749,1135 790,1130 820,1122 850,1120 890,1108 942,1106 978,1095 1030,1075 1065,1067 1100,1055 1153,1030 1206,995 1258,940 1345,845 1433,738','#da70d6');
  A('37,1970 82,1925 127,1892 171,1875 195,1865 215,1845 283,1762 328,1705 350,1683 375,1668 418,1645 440,1625 484,1570 530,1505 600,1400 640,1318 686,1245 731,1200 776,1162 821,1102 888,1025 932,1002 978,990 1022,988 1067,980 1112,978 1157,962 1180,952 1224,948 1314,962','#696969');A('1314,962 1380,980 1448,992 1490,988','#000');A('1490,988 1546,992','#696969');B('0,992 46,992 82,1003','#696969');B('82,1003 105,1017 125,1018 152,1014','#000');B('152,1014 170,1003 222,960 258,946 275,948','#696969');B('275,948 310,970 345,1005 398,1048 450,1085 485,1130 521,1195 556,1255 590,1300 608,1307','#000');B('608,1307 640,1312 700,1312 749,1297 785,1260 820,1200 855,1130 907,1045 942,1000 995,930 1030,880 1065,815 1118,730 1171,685 1206,658 1258,598 1276,570 1311,525 1345,507 1381,477 1416,447 1433,440','#696969');
  A('37,1870 82,1840 104,1818 127,1800 150,1805 171,1812 195,1812 215,1800 238,1775 262,1745 283,1705 305,1670 328,1635 350,1608 375,1593 418,1560 440,1535 462,1495 484,1450 520,1390 551,1320 575,1270 620,1205 664,1138 686,1117 710,1115 731,1105 753,1100 776,1090 800,1070 821,1042 850,1025 888,995 910,998 955,995 1022,998 1045,995 1090,968 1134,967 1180,948 1224,947 1269,950 1314,965','#7db82c');A('1314,965 1350,1000 1400,1030 1426,1035 1448,1035 1470,1025','#008000');A('1470,1025 1490,1005 1515,998 1546,998','#7db82c');B('0,998 46,973 70,980 82,990','#7db82c');B('82,990 105,1012 120,1016 152,1000','#008000');B('152,1000 170,965 205,920 222,907 240,908 258,925','#7db82c');B('258,925 280,955 310,1010 345,1085 380,1130 415,1150 433,1170 450,1200 468,1235 503,1295 530,1325 556,1347 590,1340 620,1315','#008000');B('620,1315 650,1280 679,1262 700,1267 716,1262 749,1222 785,1125 820,1060 855,990 890,940 907,923 942,920 960,905 980,870 995,835 1030,795 1065,740 1100,680 1118,655 1135,637 1153,632 1171,617 1206,597 1223,575 1240,540 1276,497 1311,468 1345,468 1363,472 1381,462 1416,418 1433,410','#7db82c');
  const star=([x,y],c)=>{x=Math.round(x);y=Math.round(y);s+=`<path stroke="${c}" d="M${x-4} ${y}h9M${x} ${y-4}v9M${x-3} ${y-3}l7 7M${x+4} ${y-3}l-7 7"/><rect x="${x-2}" y="${y-2}" width="5" height="5" fill="${c}"/>`};
  [...a('662,850 886,829 954,871 1088,785 1178,805 1514,829 326,1339 124,1618 35,1660'),...b('45,805 220,700 414,1126 677,1084 1011,592 1098,400 1257,295 1432,250')].forEach(p=>star(p,'#f00'));
  [...a('617,1126 729,1147 931,1084 998,1105 1132,1063 1401,1192 393,1598 191,1918'),...b('10,1063 115,1168 361,1406 519,1531 712,1339 940,997 1028,785 1204,635 1361,550')].forEach(p=>star(p,'#008000'));
  s+=L(1687,106,1687,650)+L(1364,106,1364,373)+L(1679,562,2811,562);
  s+=`<path fill="#f0f" d="M1442 553v10l5-5zM2561 261v10l-5-5z"/><path fill="#00f" d="M2142 410v10l5-5z"/>`+R(2795,166,2,29,'#ffd21e')+R(2805,187,2,29,'#ffd21e');
  const tr=(x,y,p,q)=>T(x,y,p,{s:13,w:700,a:'middle'})+T(x,y+15,q,{s:13,w:700,a:'middle'});
  s+=tr(1447,494,'Sell','1 @ 106.64')+tr(1486,516,'Buy','1 @ 106.75')+tr(2555,209,'Close','1 @ 107.05')+tr(2167,430,'Sell','1 @ 106.73')+tr(2146,488,'Buy','1 @ 106.84')+tr(2326,474,'Buy','1 @ 106.78');
  s+=arrow(1486,485,15,1,'#00f')+arrow(1446,516,15,0,'#f0f')+arrow(2146,457,15,1,'#00f')+arrow(2167,451,15,0,'#f0f')+arrow(2556,230,15,0,'#f0f')+arrow(2326,443,15,1,'#00f');
  s+=skip(2782,112)+`<svg x="1276" y="101" width="1535" height="30" viewBox="1276 101 1535 30">`+T(1277,119,'LinReg(CL 10-13 (4 Range),4), LinReg(CL 10-13 (4 Range),9), StMASlopeBoxMulti(CL 10-13 (4 Range),BottomRight,1,EMA,EMS,13,1,False), StDppNt7(CL 10-13 (4 Range),True,False,[Font: Name=Arial, Size=14, Units=3, GdiCharSet=1, GdiVertica',{s:13,w:700})+'</svg>';
  s+=L(1275,857,2811,857,'#000',1)+L(1875,857,2811,857,'#000',2)+L(2811,106,2811,857);
  times.forEach((t,i)=>s+=L(1286+i*60,857,1286+i*60,864)+T(1286+i*60,876,t,{s:13,w:700,a:'middle'}));
  [['107.15',196],['107.10',231],['107.05',266],['107.00',302],['106.95',338],['106.90',373],['106.85',409],['106.80',444],['106.75',479],['106.70',516],['106.65',551],['106.60',586],['106.55',622],['106.50',658],['106.45',693],['106.40',729],['106.35',764],['106.30',800],['106.25',835]].forEach(([t,y])=>s+=L(2811,y,2817,y)+T(2819,y+5,t,{s:13,w:700}));
  s+=L(2811,123,2817,123)+R(2811,554,50,17,'#000');
  s+=tag(2813,159,60,17,'107.20','#808080','#000',{s:13,w:700,dx:9})+tag(2813,536,60,17,'','#d3d3d3')+tag(2813,857,60,17,'106.22','#d3d3d3','#000',{s:13,w:700,dx:9});
  s+=T(1277,854,'© 2013 NinjaTrader, LLC',{ff:UI})+T(2535,855,'107.29:LAST',{s:18,f:'#00f'})+T(2690,855,'-0.54:NET',{s:18,f:'#f00'});
  s+=R(2766,815,40,22,'none','#00f',2)+T(2801,830,'22°',{s:16,a:'end',f:'#006400'})+`<path fill="none" stroke="#090" d="M2792.500 841l5 6h-3v8h-4v-8h-3z"/>`;
  return s;}
});

/* ---------- market profile summary ---------- */
define('profile-summary',`<style>:host{display:block;width:174px}table{border-collapse:collapse;width:100%;background:#d4d0c8}th,td{box-sizing:border-box;height:14px;padding:0 3px;border:1px solid #a0a0a0;font:inherit;line-height:13px;white-space:nowrap}th{width:86px;text-align:right}td{text-align:left}</style><table>${[['Session','08/08'],['TPO Count','768 (128/627)'],['Rotation Factor','16'],['Range','6.15'],['IB Range','0.55'],['Volume','215k'],['High','107.95'],['VA High','107.75'],['POC','107.05'],['VA Low','104.75'],['Low','101.80'],['Volume @ Price','2078']].map(([a,b])=>`<tr><th scope="row">${a}</th><td>${b}</td></tr>`).join('')}</table>`);

/* ---------- form controls ---------- */
const field='box-sizing:border-box;border:2px solid;border-color:#555 #fff #fff #555;background:#fff;height:20px';
define('pick-list',e=>{const off=e.hasAttribute('disabled');return `<style>
:host{display:flex;${field};${off?'background:#d4d0c8;':''}position:relative}
select{all:unset;flex:1;min-width:0;padding-left:2px;font:inherit;font-size:11px;color:${off?'#808080':'#000'}}
i{width:15px;background:#d4d0c8;box-sizing:border-box;border:1px solid;border-color:#fff #404040 #404040 #fff;display:grid;place-items:center}
i::after{content:"";border:solid transparent;border-width:4px 4px 0;border-top-color:${off?'#808080':'#000'}}
</style><select aria-label="${e.getAttribute('name')}"${off?' disabled':''}><option>${e.getAttribute('value').replace('<','&lt;')}</option></select><i></i>`});
define('spin-box',e=>{const off=e.hasAttribute('disabled');return `<style>
:host{display:flex;${field};${off?'background:#d4d0c8;':''}}
input{all:unset;flex:1;min-width:0;padding-left:2px;font:inherit;font-size:11px;color:${off?'#808080':'#000'}}
span{display:flex;flex-direction:column;width:15px}
button{all:unset;flex:1;background:#d4d0c8;box-sizing:border-box;border:1px solid;border-color:#fff #404040 #404040 #fff;display:grid;place-items:center}
button::after{content:"";border:solid transparent;border-width:0 2px 2px;border-bottom-color:${off?'#808080':'#000'}}
button+button::after{border-width:2px 2px 0;border-top-color:${off?'#808080':'#000'}}
</style><input aria-label="${e.getAttribute('name')}" value="${e.getAttribute('value')}"${off?' disabled':''}><span><button aria-label="Up"></button><button aria-label="Down"></button></span>`});

/* ---------- order ladder ---------- */
define('order-ladder',()=>{
 let rows='';for(let p=86;p>=64;p--){const c=p===79?'up':p===75?'hit':p===71?'dn':'';
  rows+=`<tr><td>${{71:'24',66:'16'}[p]||''}</td><td class="p ${c}">${p===75?'(1)':''}106.${p}</td><td>${{84:'13',79:'1'}[p]||''}</td></tr>`;}
 return `<style>
:host{display:block;background:#708090;overflow:hidden;flex:1}
table{border-collapse:collapse;table-layout:fixed;width:212px;height:437px;margin-left:-30px}
td,th{border:1px solid #000;padding:0;text-align:center;background:#dcdcdc;line-height:12px;font-size:11px;white-space:nowrap}
th{background:#a9a9a9;font-weight:700}
.p{background:#fff}.up{color:#006400;font-weight:700}.dn{color:#00f;font-weight:700}.hit{background:#ff0}.g{color:#696969}
.pl{background:#000;color:#0f0;font-weight:700}
.a{display:flex;margin:8px 0 0 -30px}
.a button{all:unset;box-sizing:border-box;height:23px;border:1px solid #000;background:#faebd7;font-weight:700;font-size:12px;text-align:center;margin-right:-1px}
hr{border:0;border-top:2px solid #b8c0c8;border-bottom:1px solid #404850;margin:9px 7px 2px 0}
.f{display:grid;grid-template-columns:74px 79px 62px;row-gap:5px;padding-left:4px;align-items:center}
.f label{padding-left:26px;white-space:nowrap}
.w{grid-column:1/4}
fieldset{margin:1px 7px 0 -44px;padding:8px 0 4px 46px;border:1px solid #b8c0c8;min-width:0;height:114px}
legend{padding:0 11px 0 0;margin-left:-30px;color:#202830}
.r{display:grid;grid-template-columns:77px 76px 70px;height:16px;align-items:center;margin-bottom:3px;color:#202830}
.r label{display:flex;align-items:center;gap:5px;white-space:nowrap}
.r input{appearance:none;width:12px;height:12px;margin:0;border:1px solid #808080;border-radius:50%;background:#d4d0c8}
.r input:checked{background:radial-gradient(#707070 2px,#d4d0c8 3px)}
.s{width:64px;margin-bottom:2px}
</style><table><colgroup><col style="width:58px"><col style="width:94px"><col style="width:59px"></colgroup><thead><tr><th>BUY</th><th>PRICE</th><th>SELL</th></tr></thead><tbody>${rows}
<tr><td>ASK</td><td class="p g">+ TARGET</td><td>ASK</td></tr><tr><td>BID</td><td class="p g">- TARGET</td><td>BID</td></tr><tr><td>MARKET</td><td class="pl">144.50</td><td>MARKET</td></tr></tbody></table>
<div class="a"><button style="width:59px">REV</button><button style="width:95px">FLAT</button><button style="width:60px;margin-right:6px">CLOSE</button><button style="width:19px">C</button></div><hr>
<div class="f"><pick-list name="Instrument" value="CL 10-13"></pick-list><label for="q">Order qty:</label><spin-box id="q" name="Order quantity" value="1"></spin-box>
<pick-list name="Account" value="Sim101" disabled></pick-list><label for="t">TIF:</label><pick-list id="t" name="Time in force" value="Day"></pick-list>
<pick-list class="w" name="Strategy" value="<None>"></pick-list></div>
<fieldset><legend>Strategy parameters (ticks)</legend><div class="r"><label><input type="radio" name="n" checked disabled>1 Target</label><label><input type="radio" name="n" disabled>2 Target</label><label><input type="radio" name="n" disabled>3 Target</label></div>
<spin-box class="s" name="Quantity" value="0" disabled></spin-box><spin-box class="s" name="Stop loss" value="0" disabled></spin-box><spin-box class="s" name="Profit target" value="0" disabled></spin-box><pick-list class="s" name="Stop strategy" value="<None>" disabled></pick-list></fieldset>`});

define('trading-desktop',`<style>
:host{display:grid;grid-template-columns:1275fr 1578fr;height:100vh;overflow:hidden}
section{position:relative;overflow:hidden;background:repeating-linear-gradient(8deg,#4a3826 0 7px,#8d7350 11px,#b09468 15px,#3a2a1c 22px,#776044 31px)}
section+section{background:#000}
.tpo{left:577px;right:7px;top:539px}
.tick{left:0;right:7px;top:0}
.min{left:-2px;width:576px;top:534px}
.lad{left:-2px;width:236px;top:61px;height:716px}
.range{left:-1px;right:-21px;top:56px}
profile-summary{left:4px;top:17px}
</style>
<section>
<desk-window class="tpo" heading="CL 10-13 (30 Min)  8/19/2013"><tool-bar instrument="CL 10-13" period="30 Min"></tool-bar><tpo-chart><profile-summary></profile-summary></tpo-chart></desk-window>
<desk-window class="tick" heading="CL 10-13 (800 Tick)  8/19/2013"><tool-bar instrument="CL 10-13" period="800 Tick"></tool-bar><ladder-chart></ladder-chart><scroll-track before="681" size="75" after="475"></scroll-track></desk-window>
<desk-window class="min" kind="tail" heading="CL 10-13 (5 Min)  8/19/2013"><tool-bar instrument="CL 10-13" period="5 Min"></tool-bar><minute-chart></minute-chart></desk-window>
<desk-window class="lad" kind="tool"><order-ladder></order-ladder></desk-window>
</section>
<section><desk-window class="range" kind="restore" heading="CL 10-13 (4 Range)  8/19/2013"><tool-bar instrument="CL 10-13" period="4 Range"></tool-bar><range-chart></range-chart><scroll-track before="1113" size="108" after="343"></scroll-track></desk-window></section>`);
</script>
</body>
</html>
